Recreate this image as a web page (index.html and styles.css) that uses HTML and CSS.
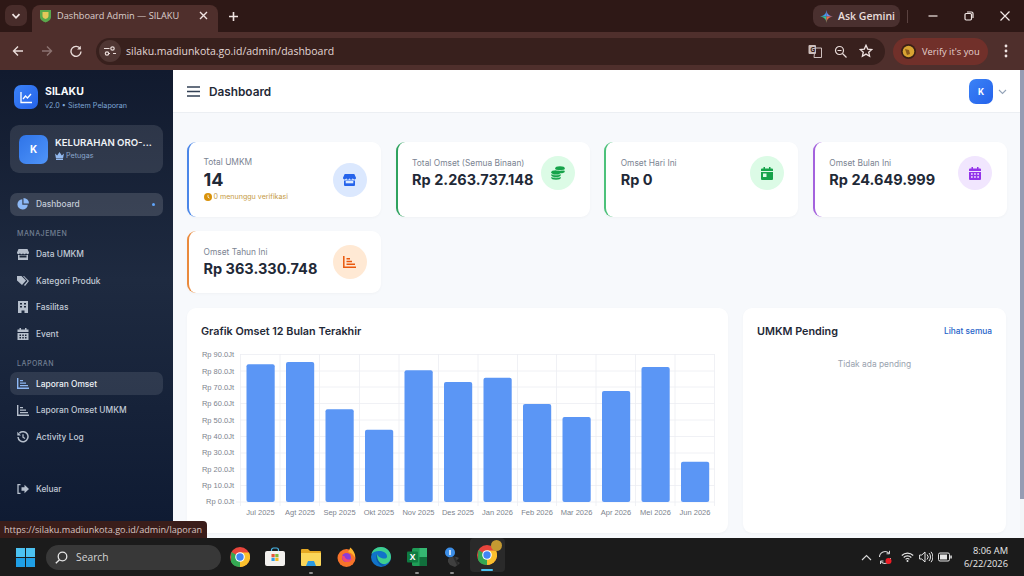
FILE: index.html
```html
<!DOCTYPE html>
<html lang="id">
<head>
<meta charset="utf-8">
<title>Dashboard Admin — SILAKU</title>
<link rel="stylesheet" href="styles.css">
</head>
<body>
<div class="tabstrip">
  <div class="tablist"><svg width="10" height="10" viewBox="0 0 10 10"><path d="M1.500 3.200 5 6.800l3.500-3.600" fill="none" stroke="#f0e4e2" stroke-width="1.800"/></svg></div>
  <div class="tab">
    <svg class="favicon" width="13" height="14" viewBox="0 0 13 14"><path d="M1 1h11v7c0 3-3 4.500-5.500 5.500C4 12.500 1 11 1 8z" fill="#5aa84c"/><path d="M3.500 3h6v4c0 1.500-1.500 2.500-3 3-1.500-.5-3-1.500-3-3z" fill="#e6c85a"/></svg>
    <span class="tabtitle">Dashboard Admin — SILAKU</span>
    <svg class="tabx" width="9" height="9" viewBox="0 0 9 9"><path d="M1 1l7 7M8 1 1 8" stroke="#f0e4e2" stroke-width="1.400"/></svg>
  </div>
  <svg class="newtab" width="11" height="11" viewBox="0 0 11 11"><path d="M5.500 1v9M1 5.500h9" stroke="#f0e4e2" stroke-width="1.600"/></svg>
  <div class="stripspace"></div>
  <div class="gemini">
    <svg width="13" height="13" viewBox="0 0 13 13"><path d="M6.500 6.500V0C6 4 4 6 0 6.500z" fill="#3d9df0"/><path d="M6.500 6.500V0C7 4 9 6 13 6.500z" fill="#6a8cf0"/><path d="M6.500 6.500H0C4 7 6 9 6.500 13z" fill="#35c08f"/><path d="M6.500 6.500H13C9 7 7 9 6.500 13z" fill="#f06a4a"/></svg>
    <span>Ask Gemini</span>
  </div>
  <div class="stripsep"></div>
  <div class="winctl">
    <svg width="12" height="12" viewBox="0 0 12 12"><path d="M1.500 6h9" stroke="#f3e9e7" stroke-width="1.200"/></svg>
    <svg width="12" height="12" viewBox="0 0 12 12"><rect x="2" y="3.500" width="6.500" height="6.500" rx="1.200" fill="none" stroke="#f3e9e7" stroke-width="1.200"/><path d="M4 2h4.500A1.500 1.500 0 0 1 10 3.500V8" fill="none" stroke="#f3e9e7" stroke-width="1.200"/></svg>
    <svg width="12" height="12" viewBox="0 0 12 12"><path d="M1.500 1.500l9 9M10.500 1.500l-9 9" stroke="#f3e9e7" stroke-width="1.200"/></svg>
  </div>
</div>

<div class="toolbar">
  <svg class="navbtn" width="12" height="12" viewBox="0 0 12 12"><path d="M11 6H1.500M6 1.500 1.500 6 6 10.500" fill="none" stroke="#eaddda" stroke-width="1.400"/></svg>
  <svg class="navbtn" width="12" height="12" viewBox="0 0 12 12"><path d="M1 6h9.500M6 1.500 10.500 6 6 10.500" fill="none" stroke="#8c7371" stroke-width="1.400"/></svg>
  <svg class="navbtn" width="12" height="12" viewBox="0 0 12 12"><path d="M10.300 3.800A5 5 0 1 0 11 6.500" fill="none" stroke="#eaddda" stroke-width="1.400"/><path d="M10.800 .8v3.700H7.100z" fill="#eaddda"/></svg>
  <div class="omnibox">
    <div class="siteinfo"><svg width="12" height="10" viewBox="0 0 12 10"><path d="M0 2.500h5.500M9 7.500h3" stroke="#eaddda" stroke-width="1.200"/><circle cx="8.500" cy="2.500" r="1.700" fill="none" stroke="#eaddda" stroke-width="1.200"/><circle cx="3" cy="7.500" r="1.700" fill="none" stroke="#eaddda" stroke-width="1.200"/><path d="M6 7.500h-1" stroke="#eaddda"/></svg></div>
    <span class="url">silaku.madiunkota.go.id/admin/dashboard</span>
    <div class="omniicons">
      <svg width="14" height="14" viewBox="0 0 14 14"><path d="M7 4h6.500v9.500H6z" fill="#3a1f1c" stroke="#cdbfbd"/><rect x="0.500" y="1" width="7.500" height="9" rx="1" fill="#cdbfbd"/><text x="2.200" y="7.800" class="trglyph">G</text></svg>
      <svg width="13" height="13" viewBox="0 0 13 13"><circle cx="5.500" cy="5.500" r="4" fill="none" stroke="#eaddda" stroke-width="1.200"/><path d="M8.500 8.500l4 4M3.500 5.500h4" stroke="#eaddda" stroke-width="1.200"/></svg>
      <svg width="14" height="14" viewBox="0 0 14 14"><path d="M7 1.300l1.700 3.800 4.100.4-3.100 2.700.9 4-3.600-2.100-3.600 2.100.9-4L1.200 5.500l4.100-.4z" fill="none" stroke="#f0e4e2" stroke-width="1.300"/></svg>
    </div>
  </div>
  <div class="verify">
    <svg width="15" height="15" viewBox="0 0 15 15"><circle cx="7.500" cy="7.500" r="7.500" fill="#3a2016"/><circle cx="7.500" cy="7.500" r="5.800" fill="#d8a432"/><path d="M4 5l4 1 1 4-3 1z" fill="#8a5a1c"/></svg>
    <span>Verify it's you</span>
  </div>
  <svg class="kebab" width="4" height="14" viewBox="0 0 4 14"><circle cx="2" cy="2" r="1.400" fill="#f0e4e2"/><circle cx="2" cy="7" r="1.400" fill="#f0e4e2"/><circle cx="2" cy="12" r="1.400" fill="#f0e4e2"/></svg>
</div>

<div class="page">
  <aside class="sidebar">
    <div class="brand">
      <div class="brandlogo"><svg width="13" height="13" viewBox="0 0 13 13"><path d="M1 1v10.500h11" fill="none" stroke="#fff" stroke-width="1.300"/><path d="M3 8l2.500-3 2 2L11 3" fill="none" stroke="#fff" stroke-width="1.300"/></svg></div>
      <div class="brandtext">
        <div class="brandname">SILAKU</div>
        <div class="brandsub">v2.0 • Sistem Pelaporan</div>
      </div>
    </div>
    <div class="usercard">
      <div class="useravatar">K</div>
      <div class="usertext">
        <div class="username">KELURAHAN ORO-...</div>
        <div class="userrole"><svg width="9" height="8" viewBox="0 0 9 8"><path d="M0 1.500l2.200 2L4.500 0l2.300 3.500 2.200-2L8 6.500H1zM1 7h7v1H1z" fill="#93b9ef"/></svg>Petugas</div>
      </div>
    </div>
    <nav class="nav">
      <a class="navitem active"><svg class="navico" width="12" height="12" viewBox="0 0 12 12"><path d="M5.300 1.200A5.200 5.200 0 1 0 10.800 6.700H5.300z" fill="#8db8f5"/><path d="M6.500 0a5.500 5.500 0 0 1 5.500 5.500H6.500z" fill="#8db8f5"/></svg><span>Dashboard</span><i class="navdot"></i></a>
      <div class="navlabel">MANAJEMEN</div>
      <a class="navitem"><svg class="navico" width="12" height="11" viewBox="0 0 12 11"><path d="M1.500 0h9L12 3.500a1.500 1.500 0 0 1-3 .3 1.500 1.500 0 0 1-3 0 1.500 1.500 0 0 1-3 0 1.500 1.500 0 0 1-3-.3z" fill="#b6bfcc"/><path d="M1 6h10v5H1z" fill="#b6bfcc"/><path d="M2.500 6.500h7v2h-7z" fill="#1b2639"/></svg><span>Data UMKM</span></a>
      <a class="navitem"><svg class="navico" width="12" height="10" viewBox="0 0 12 10"><path d="M0 0h4.500L9 4.500 5 9 0 4.500z" fill="#b6bfcc"/><path d="M6 0h1l5 5-4 5-1-1 3.500-4z" fill="#b6bfcc"/></svg><span>Kategori Produk</span></a>
      <a class="navitem"><svg class="navico" width="10" height="12" viewBox="0 0 10 12"><path d="M0 0h10v12H6.500V9.500h-3V12H0z" fill="#b6bfcc"/><path d="M2 2h2v1.500H2zM6 2h2v1.500H6zM2 5h2v1.500H2zM6 5h2v1.500H6z" fill="#1b2639"/></svg><span>Fasilitas</span></a>
      <a class="navitem"><svg class="navico" width="11" height="12" viewBox="0 0 11 12"><path d="M2 0h1.500v1.500h4V0H9v1.500h2V4H0V1.500h2zM0 5h11v7H0z" fill="#b6bfcc"/><path d="M2 6.500h1.500V8H2zM4.800 6.500h1.500V8H4.800zM7.500 6.500H9V8H7.500zM2 9h1.500v1.500H2zM4.800 9h1.500v1.500H4.800zM7.500 9H9v1.500H7.500z" fill="#1b2639"/></svg><span>Event</span></a>
      <div class="navlabel second">LAPORAN</div>
      <a class="navitem current"><svg class="navico" width="12" height="11" viewBox="0 0 12 11"><path d="M.7 0v10.300H12" fill="none" stroke="#8db8f5" stroke-width="1.400"/><path d="M3 2h3v1.300H3zM3 4.500h6v1.300H3zM3 7h8v1.300H3z" fill="#8db8f5"/></svg><span>Laporan Omset</span></a>
      <a class="navitem"><svg class="navico" width="12" height="11" viewBox="0 0 12 11"><path d="M.7 0v10.300H12" fill="none" stroke="#b6bfcc" stroke-width="1.400"/><path d="M3 2h3v1.300H3zM3 4.500h6v1.300H3zM3 7h8v1.300H3z" fill="#b6bfcc"/></svg><span>Laporan Omset UMKM</span></a>
      <a class="navitem"><svg class="navico" width="12" height="12" viewBox="0 0 12 12"><path d="M2.300 2.300A5 5 0 1 1 1 6" fill="none" stroke="#b6bfcc" stroke-width="1.500"/><path d="M.3.800 4 4.500H.3z" fill="#b6bfcc"/><path d="M6 3.200v3l2 1.300" fill="none" stroke="#b6bfcc" stroke-width="1.300"/></svg><span>Activity Log</span></a>
      <a class="navitem logout"><svg class="navico" width="12" height="10" viewBox="0 0 12 10"><path d="M3.500 .7H1v8.600h2.500" fill="none" stroke="#b6bfcc" stroke-width="1.300"/><path d="M4.500 3.300h3V.8L12 5 7.500 9.200V6.700h-3z" fill="#b6bfcc"/></svg><span>Keluar</span></a>
    </nav>
  </aside>

  <main class="main">
    <header class="topbar">
      <svg width="13" height="11" viewBox="0 0 13 11"><path d="M0 1h13M0 5.500h13M0 10h13" stroke="#334155" stroke-width="1.700"/></svg>
      <h1 class="pagetitle">Dashboard</h1>
      <div class="topuser">
        <div class="topavatar">K</div>
        <svg width="9" height="6" viewBox="0 0 9 6"><path d="M1 1l3.500 3.500L8 1" fill="none" stroke="#94a3b8" stroke-width="1.100"/></svg>
      </div>
    </header>

    <div class="content">
      <section class="stats">
        <div class="stat blue">
          <div class="statinner">
            <div class="stattext">
              <div class="statlabel">Total UMKM</div>
              <div class="statvalue big">14</div>
              <div class="statnote"><svg width="8" height="8" viewBox="0 0 8 8"><circle cx="4" cy="4" r="4" fill="#d9920a"/><path d="M4 1.800V4.200l1.500 1" fill="none" stroke="#fff" stroke-width=".8"/></svg>0 menunggu verifikasi</div>
            </div>
            <div class="staticon ic-blue"><svg width="13" height="12" viewBox="0 0 13 12"><path d="M1.700 0h9.600L13 3.800a1.600 1.600 0 0 1-3.200.3 1.600 1.600 0 0 1-3.300 0 1.600 1.600 0 0 1-3.300 0 1.600 1.600 0 0 1-3.200-.3z" fill="#2563eb"/><path d="M1 6.500h11V11a1 1 0 0 1-1 1H2a1 1 0 0 1-1-1z" fill="#2563eb"/><path d="M2.700 7h7.600v2.300H2.700z" fill="#dbeafe"/></svg></div>
          </div>
        </div>
        <div class="stat green">
          <div class="statinner">
            <div class="stattext">
              <div class="statlabel">Total Omset (Semua Binaan)</div>
              <div class="statvalue">Rp 2.263.737.148</div>
            </div>
            <div class="staticon ic-green"><svg width="14" height="14" viewBox="0 0 14 14"><g fill="#16a34a"><ellipse cx="9" cy="2.500" rx="4.800" ry="2.300"/><ellipse cx="9" cy="5.500" rx="4.800" ry="1.800"/><ellipse cx="5" cy="6.300" rx="4.800" ry="2"/><ellipse cx="5" cy="9" rx="4.800" ry="1.800"/><ellipse cx="5" cy="11.800" rx="4.800" ry="1.900"/></g><path d="M.5 7.900c1 1.300 8 1.300 9 0M.5 10.700c1 1.300 8 1.300 9 0M4.500 3.700c1 1.100 8 1.100 9 0" fill="none" stroke="#dcfce7" stroke-width=".7"/></svg></div>
          </div>
        </div>
        <div class="stat lime">
          <div class="statinner">
            <div class="stattext">
              <div class="statlabel">Omset Hari Ini</div>
              <div class="statvalue">Rp 0</div>
            </div>
            <div class="staticon ic-green"><svg width="12" height="13" viewBox="0 0 12 13"><path d="M2.500 0H4v1.500h4V0h1.500v1.500H11A1 1 0 0 1 12 2.500V4H0V2.500a1 1 0 0 1 1-1h1.500zM0 5h12v7a1 1 0 0 1-1 1H1a1 1 0 0 1-1-1z" fill="#16a34a"/><rect x="2" y="6.500" width="3.500" height="3.500" fill="#dcfce7"/></svg></div>
          </div>
        </div>
        <div class="stat purple">
          <div class="statinner">
            <div class="stattext">
              <div class="statlabel">Omset Bulan Ini</div>
              <div class="statvalue">Rp 24.649.999</div>
            </div>
            <div class="staticon ic-purple"><svg width="12" height="13" viewBox="0 0 12 13"><path d="M2.500 0H4v1.500h4V0h1.500v1.500H11A1 1 0 0 1 12 2.500V4H0V2.500a1 1 0 0 1 1-1h1.500zM0 5h12v7a1 1 0 0 1-1 1H1a1 1 0 0 1-1-1z" fill="#9333ea"/><path d="M2 6.200h1.700v1.500H2zM5.100 6.200h1.700v1.500H5.100zM8.300 6.200H10v1.500H8.300zM2 9.200h1.700v1.500H2zM5.100 9.200h1.700v1.500H5.100zM8.300 9.200H10v1.500H8.300z" fill="#f3e8ff"/></svg></div>
          </div>
        </div>
        <div class="stat orange">
          <div class="statinner">
            <div class="stattext">
              <div class="statlabel">Omset Tahun Ini</div>
              <div class="statvalue">Rp 363.330.748</div>
            </div>
            <div class="staticon ic-orange"><svg width="13" height="12" viewBox="0 0 13 12"><path d="M.8 0v11.200H13" fill="none" stroke="#ea580c" stroke-width="1.500"/><path d="M3.500 2H7v1.500H3.500zM3.500 4.800H9v1.500H3.500zM3.500 7.600H12v1.500H3.500z" fill="#ea580c"/></svg></div>
          </div>
        </div>
      </section>

      <section class="panels">
        <div class="panel">
          <h2 class="paneltitle">Grafik Omset 12 Bulan Terakhir</h2>
          <svg class="chart" width="541" height="186" viewBox="187 350 541 186">
            <g class="grid">
              <path d="M240 354.500H714.500M240 371H714.500M240 387H714.500M240 403.500H714.500M240 420H714.500M240 436.500H714.500M240 453H714.500M240 469H714.500M240 485.500H714.500M236 502H714.500"/>
              <path d="M240.500 354V506M280 354V506M319.500 354V506M359.500 354V506M399 354V506M438.500 354V506M478 354V506M517.500 354V506M556.500 354V506M596 354V506M635.500 354V506M675 354V506M714.500 354V506"/>
            </g>
            <g class="bars">
              <rect x="246.500" y="364.300" width="28.200" height="137.700" rx="2"/>
              <rect x="286" y="362" width="28.200" height="140" rx="2"/>
              <rect x="325.500" y="409.300" width="28.200" height="92.700" rx="2"/>
              <rect x="365" y="429.700" width="28.200" height="72.300" rx="2"/>
              <rect x="404.500" y="370.300" width="28.200" height="131.700" rx="2"/>
              <rect x="444" y="382" width="28.200" height="120" rx="2"/>
              <rect x="483.500" y="377.700" width="28.200" height="124.300" rx="2"/>
              <rect x="523" y="404" width="28.200" height="98" rx="2"/>
              <rect x="562.500" y="417" width="28.200" height="85" rx="2"/>
              <rect x="602" y="391" width="28.200" height="111" rx="2"/>
              <rect x="641.500" y="367" width="28.200" height="135" rx="2"/>
              <rect x="681" y="461.700" width="28.200" height="40.300" rx="2"/>
            </g>
            <g class="yticks">
              <text x="234" y="357">Rp 90.0Jt</text>
              <text x="234" y="373.500">Rp 80.0Jt</text>
              <text x="234" y="390">Rp 70.0Jt</text>
              <text x="234" y="406">Rp 60.0Jt</text>
              <text x="234" y="422.500">Rp 50.0Jt</text>
              <text x="234" y="439">Rp 40.0Jt</text>
              <text x="234" y="455">Rp 30.0Jt</text>
              <text x="234" y="471.500">Rp 20.0Jt</text>
              <text x="234" y="488">Rp 10.0Jt</text>
              <text x="234" y="504">Rp 0.0Jt</text>
            </g>
            <g class="xticks">
              <text x="260.500" y="515">Jul 2025</text>
              <text x="300" y="515">Agt 2025</text>
              <text x="339.500" y="515">Sep 2025</text>
              <text x="379" y="515">Okt 2025</text>
              <text x="418.500" y="515">Nov 2025</text>
              <text x="458" y="515">Des 2025</text>
              <text x="497.500" y="515">Jan 2026</text>
              <text x="537" y="515">Feb 2026</text>
              <text x="576.500" y="515">Mar 2026</text>
              <text x="616" y="515">Apr 2026</text>
              <text x="655.500" y="515">Mei 2026</text>
              <text x="695" y="515">Jun 2026</text>
            </g>
          </svg>
        </div>
        <div class="panel pending">
          <div class="pendinghead">
            <h2 class="paneltitle">UMKM Pending</h2>
            <a class="seeall">Lihat semua</a>
          </div>
          <p class="empty">Tidak ada pending</p>
        </div>
      </section>
    </div>
  </main>
  <div class="scrollbar"><div class="scrollthumb"></div></div>
  <div class="statusbubble">https://silaku.madiunkota.go.id/admin/laporan</div>
</div>

<footer class="taskbar">
  <svg class="winlogo" width="19" height="19" viewBox="0 0 19 19"><rect width="9" height="9" fill="#4cc2f1"/><rect x="10" width="9" height="9" fill="#4cc2f1"/><rect y="10" width="9" height="9" fill="#1f9fe6"/><rect x="10" y="10" width="9" height="9" fill="#1f9fe6"/></svg>
  <div class="search">
    <svg width="13" height="13" viewBox="0 0 13 13"><circle cx="7.500" cy="5.500" r="4.300" fill="none" stroke="#e6e6e6" stroke-width="1.300"/><path d="M4.500 8.700.8 12.300" stroke="#e6e6e6" stroke-width="1.400"/></svg>
    <span>Search</span>
  </div>
  <div class="apps">
    <div class="app"><svg width="20" height="20" viewBox="0 0 20 20"><circle cx="10" cy="10" r="10" fill="#e8453c"/><path d="M10 10 1.300 5 1 15a10 10 0 0 0 9 5z" fill="#34a853"/><path d="M10 5.500h9A10 10 0 0 1 10 20z" fill="#fbc02d"/><circle cx="10" cy="10" r="4.800" fill="#fff"/><circle cx="10" cy="10" r="3.700" fill="#4285f4"/></svg></div>
    <div class="app"><svg width="20" height="20" viewBox="0 0 20 20"><path d="M6.500 5V3a2 2 0 0 1 2-2h3a2 2 0 0 1 2 2v2" fill="none" stroke="#49b7e8" stroke-width="1.200"/><rect y="4" width="20" height="15" rx="2" fill="#f3f1ee"/><rect x="6.500" y="7" width="3.200" height="3.200" fill="#e8563a"/><rect x="10.300" y="7" width="3.200" height="3.200" fill="#7fb93a"/><rect x="6.500" y="10.800" width="3.200" height="3.200" fill="#2f9ee8"/><rect x="10.300" y="10.800" width="3.200" height="3.200" fill="#f5b921"/></svg></div>
    <div class="app dotbelow"><svg width="20" height="17" viewBox="0 0 20 17"><path d="M0 1a1 1 0 0 1 1-1h6l2 2h10a1 1 0 0 1 1 1v3H0z" fill="#e5a823"/><path d="M0 4h20v12a1 1 0 0 1-1 1H1a1 1 0 0 1-1-1z" fill="#fbd65a"/><path d="M5 17l2-5h6l2 5z" fill="#2d9ae0"/></svg></div>
    <div class="app"><svg width="19" height="20" viewBox="0 0 19 20"><circle cx="9.500" cy="11" r="9" fill="#f7732a"/><path d="M13 .5c3 2 5.500 6 5 10-2-3-4-5-7-5.500 1-1.500 2-3 2-4.500z" fill="#fdb32c"/><circle cx="9.500" cy="10.500" r="4.500" fill="#8c3bd8"/><path d="M5 9c0 4 3 6.500 6 6 2.500-.5 4-2 4.500-4-1.500 1.500-4 2-6 1-1.500-.8-2-2-2-3z" fill="#f0477a"/></svg></div>
    <div class="app"><svg width="20" height="20" viewBox="0 0 20 20"><circle cx="10" cy="10" r="10" fill="#1173c9"/><path d="M20 10c0-5.500-4.500-10-10-10C5 0 1.500 3 .5 7c2-2.500 5.500-3.500 9-3 4 .5 7 3 6.500 6 0 .8-1 1.500-2.500 1.500C9 11.500 6.500 9 6 7c-1 4 1 9 6 10 4 .7 8-3 8-7z" fill="#3ecf8e"/><path d="M6 7c-2 3-.5 9 4 11.500 1.500.5 3 .2 4.500-.5-4-.5-7-3-8-6.500-.4-1.500-.5-3-.5-4.500z" fill="#0c59a4"/></svg></div>
    <div class="app dotbelow"><svg width="20" height="18" viewBox="0 0 20 18"><rect x="5" width="15" height="18" rx="1.500" fill="#1f9d57"/><rect x="12.500" width="7.500" height="9" fill="#35b872"/><rect x="12.500" y="9" width="7.500" height="9" fill="#116f3c"/><rect y="3.500" width="11" height="11" rx="1" fill="#0f7b41"/><text x="2.700" y="12" class="xlglyph">X</text></svg></div>
    <div class="app dotbelow"><svg width="18" height="21" viewBox="0 0 18 21"><circle cx="7" cy="5.500" r="5" fill="#3d8fe8"/><path d="M7 3v5" stroke="#fff" stroke-width="1.400"/><path d="M5 12c3-2.500 8-3 11-1l-3 3 4 2-5 4-5-2-2-3z" fill="#3f3f3f"/><path d="M11 10l4 8" stroke="#2b2b2b" stroke-width="2"/></svg></div>
    <div class="app activeapp"><svg width="20" height="20" viewBox="0 0 20 20"><circle cx="10" cy="10" r="10" fill="#e8453c"/><path d="M10 10 1.300 5 1 15a10 10 0 0 0 9 5z" fill="#34a853"/><path d="M10 5.500h9A10 10 0 0 1 10 20z" fill="#fbc02d"/><circle cx="10" cy="10" r="4.800" fill="#fff"/><circle cx="10" cy="10" r="3.700" fill="#4285f4"/></svg><i class="appbadge"></i><i class="appline"></i></div>
  </div>
  <div class="tray">
    <svg width="11" height="7" viewBox="0 0 11 7"><path d="M1 6l4.500-4.500L10 6" fill="none" stroke="#d8d8d8" stroke-width="1.100"/></svg>
    <svg class="sync" width="14" height="15" viewBox="0 0 14 15"><path d="M1.500 7a5.500 5.500 0 0 1 9.500-3.700M12.500 8a5.500 5.500 0 0 1-9.500 3.700" fill="none" stroke="#d8d8d8" stroke-width="1.100"/><path d="M11.500 .8v3H8.500M2.500 14v-3h3" fill="none" stroke="#d8d8d8"/><circle cx="10.500" cy="11" r="3" fill="#ee1c25"/></svg>
    <svg width="13" height="10" viewBox="0 0 13 10"><path d="M.8 3.500a8 8 0 0 1 11.400 0M2.700 5.500a5.300 5.300 0 0 1 7.600 0M4.600 7.400a2.600 2.600 0 0 1 3.800 0" fill="none" stroke="#e6e6e6" stroke-width="1.100"/><circle cx="6.500" cy="9" r="1" fill="#e6e6e6"/></svg>
    <svg width="14" height="12" viewBox="0 0 14 12"><path d="M.6 4h2.200L6 1v10L2.800 8H.6z" fill="none" stroke="#e6e6e6"/><path d="M8 3.500a3.500 3.500 0 0 1 0 5M10 2a6 6 0 0 1 0 8M12 .8a8 8 0 0 1 0 10.400" fill="none" stroke="#e6e6e6"/></svg>
    <svg width="14" height="10" viewBox="0 0 14 10"><rect x=".5" y="1" width="11" height="8" rx="1.500" fill="none" stroke="#e6e6e6"/><rect x="2" y="2.500" width="7" height="5" fill="#e6e6e6"/><rect x="12.300" y="3.500" width="1.500" height="3" fill="#e6e6e6"/></svg>
  </div>
  <div class="clock"><span>8:06 AM</span><span>6/22/2026</span></div>
</footer>
</body>
</html>
```
FILE: styles.css
```css
* { box-sizing: border-box; }
html, body { margin: 0; padding: 0; }
body {
  width: 1024px;
  height: 576px;
  overflow: hidden;
  display: flex;
  flex-direction: column;
  font-family: "Inter", "Liberation Sans", sans-serif;
  background: #1c1c1c;
}

/* browser frame */
.tabstrip {
  height: 32px;
  flex: none;
  display: flex;
  align-items: flex-start;
  background: #2e1816;
  font-family: "Open Sans", "Liberation Sans", sans-serif;
}
.tablist {
  width: 22px;
  height: 21px;
  margin: 5px 0 0 5px;
  border-radius: 7px;
  background: #482c2a;
  display: flex;
  align-items: center;
  justify-content: center;
}
.tab {
  width: 186px;
  height: 27px;
  margin: 5px 0 0 5px;
  padding: 0 10px 6px 7px;
  border-radius: 8px 8px 0 0;
  background: #4f2f2c;
  display: flex;
  align-items: center;
}
.tabtitle {
  flex: 1;
  margin-left: 5px;
  font-size: 9.200px;
  color: #ddcfcd;
  white-space: nowrap;
}
.newtab { margin: 11px 0 0 10px; }
.stripspace { flex: 1; }
.gemini {
  width: 87px;
  height: 22px;
  margin-top: 5px;
  border-radius: 8px;
  background: #4a302f;
  display: flex;
  align-items: center;
  gap: 5px;
  padding-left: 7px;
  font-size: 10.500px;
  font-weight: 600;
  color: #e9dedc;
}
.stripsep {
  width: 1px;
  height: 13px;
  margin: 10px 0 0 7px;
  background: #5a4240;
}
.winctl {
  width: 116px;
  margin-top: 10px;
  padding: 0 13px 0 19px;
  display: flex;
  justify-content: space-between;
}
.toolbar {
  height: 38px;
  flex: none;
  display: flex;
  align-items: center;
  background: #4f2f2c;
  padding-left: 12px;
  font-family: "Open Sans", "Liberation Sans", sans-serif;
}
.navbtn { margin-right: 17px; }
.omnibox {
  width: 789px;
  height: 27px;
  margin-left: -3px;
  border-radius: 14px;
  background: #38201d;
  display: flex;
  align-items: center;
  padding: 0 12px 0 3px;
}
.siteinfo {
  width: 22px;
  height: 22px;
  border-radius: 50%;
  background: #4f3633;
  display: flex;
  align-items: center;
  justify-content: center;
}
.url {
  margin-left: 5px;
  font-size: 10.500px;
  color: #e2d6d4;
  white-space: nowrap;
  flex: 1;
}
.omniicons { display: flex; align-items: center; gap: 12px; }
.trglyph { font-size: 7px; fill: #3a1f1c; font-weight: 700; }
.verify {
  width: 95px;
  height: 27px;
  margin-left: 8px;
  border-radius: 14px;
  background: #71302a;
  display: flex;
  align-items: center;
  gap: 6px;
  padding-left: 8px;
  font-size: 9.300px;
  color: #e6d2cf;
  white-space: nowrap;
}
.kebab { margin-left: 16px; }

/* page */
.page {
  position: relative;
  height: 468px;
  flex: none;
  display: flex;
  overflow: hidden;
  background: #f7f9fc;
}
.sidebar {
  width: 173px;
  flex: none;
  padding: 15px 10px 0;
  background: linear-gradient(180deg, #111a2e 0%, #1e2a40 45%, #0e1a32 100%);
}
.brand { display: flex; align-items: center; gap: 7px; padding-left: 4px; height: 24px; }
.brandtext { padding-top: 2px; }
.brandlogo, .useravatar, .topavatar {
  display: flex;
  align-items: center;
  justify-content: center;
  background: linear-gradient(135deg, #3b82f6, #2563eb);
  color: #fff;
  font-weight: 700;
}
.brandlogo { width: 24px; height: 24px; border-radius: 7px; }
.brandname { font-size: 10.500px; font-weight: 700; color: #f8fafc; line-height: 13px; }
.brandsub { font-size: 7.200px; color: #7ea6d6; line-height: 10px; margin-top: 3px; white-space: nowrap; }
.usercard {
  margin-top: 16px;
  height: 48px;
  border-radius: 9px;
  background: rgba(255, 255, 255, 0.11);
  display: flex;
  align-items: center;
  gap: 7px;
  padding-left: 9px;
}
.useravatar { width: 29px; height: 29px; border-radius: 7px; font-size: 10px; background: linear-gradient(135deg, #2f74e8, #4f94f8); }
.username { font-size: 9.600px; font-weight: 600; color: #eef2f7; line-height: 12px; white-space: nowrap; }
.userrole { display: flex; align-items: center; gap: 2px; font-size: 7.200px; color: #8aa6cc; line-height: 10px; margin-top: 2px; }
.nav { margin-top: 19.500px; display: flex; flex-direction: column; }
.navitem {
  height: 23px;
  margin-bottom: 3.500px;
  border-radius: 7px;
  display: flex;
  align-items: center;
  padding-left: 7px;
  font-size: 8.400px;
  font-weight: 500;
  color: #c2cad6;
  white-space: nowrap;
}
.navico { flex: none; margin-right: 7px; width: 12px; }
.navitem.active { background: rgba(255, 255, 255, 0.14); color: #c5ccd8; }
.navitem.current { background: rgba(255, 255, 255, 0.1); color: #eef2f7; }
.navdot { width: 3px; height: 3px; margin-left: auto; margin-right: 8px; border-radius: 50%; background: #60a5fa; }
.navlabel {
  height: 23px;
  margin-top: -3px;
  margin-bottom: 3.500px;
  display: flex;
  align-items: flex-end;
  padding: 0 0 0 7px;
  font-size: 7px;
  font-weight: 500;
  letter-spacing: .5px;
  color: #727f92;
  line-height: 11px;
}
.navlabel.second { height: 19.500px; margin-top: 0.500px; }
.logout { margin-top: 25.500px; }

.main { width: 847px; flex: none; }
.topbar {
  height: 43px;
  padding: 1px 0 0 14px;
  background: #fff;
  border-bottom: 1px solid #eceff3;
  display: flex;
  align-items: center;
}
.pagetitle { margin: 0 0 0 9px; font-size: 11.800px; font-weight: 600; color: #1f2937; }
.topuser { margin-left: auto; margin-right: 13px; display: flex; align-items: center; gap: 5px; }
.topavatar { width: 24px; height: 25px; border-radius: 7px; font-size: 8.500px; }
.content { padding: 29px 14px 0; }
.stats {
  display: grid;
  grid-template-columns: repeat(4, 194px);
  gap: 14px 14.600px;
}
.stat {
  background: #fff;
  border-left: 2.500px solid;
  border-radius: 9px;
  padding: 14px 14.500px;
  box-shadow: 0 1px 3px rgba(15, 23, 42, 0.03);
}
.blue { border-color: #4a86e8; }
.green { border-color: #2fa35f; }
.lime { border-color: #4cc17a; }
.purple { border-color: #a463dd; }
.orange { border-color: #ea8a3c; }
.statinner { display: flex; align-items: center; justify-content: space-between; }
.statlabel { font-size: 8.400px; color: #7b8492; line-height: 12px; }
.statvalue { font-size: 14.500px; font-weight: 700; color: #1f2937; line-height: 21px; white-space: nowrap; }
.statvalue.big { font-size: 18px; line-height: 23px; }
.statnote { display: flex; align-items: center; gap: 2px; font-size: 7.100px; color: #c59a44; line-height: 12px; }
.staticon {
  width: 34px;
  height: 34px;
  flex: none;
  border-radius: 50%;
  display: flex;
  align-items: center;
  justify-content: center;
}
.ic-blue { background: #dbe8fe; }
.ic-green { background: #dcfbe6; }
.ic-purple { background: #f1e6fe; }
.ic-orange { background: #ffe9d4; }

.panels {
  margin-top: 15px;
  display: grid;
  grid-template-columns: 541px 263px;
  gap: 15px;
}
.panel {
  height: 225px;
  background: #fff;
  border-radius: 9px;
  box-shadow: 0 1px 3px rgba(15, 23, 42, 0.03);
  position: relative;
}
.paneltitle {
  margin: 0;
  padding: 17px 0 0 14px;
  font-size: 10.800px;
  font-weight: 600;
  line-height: 14px;
  color: #1f2937;
}
.chart { display: block; margin-top: 11px; }
.grid path { fill: none; stroke: #eceef2; stroke-width: .8; }
.bars rect { fill: #5b96f5; }
.yticks text, .xticks text {
  font-family: "Liberation Sans", sans-serif;
  font-size: 7.500px;
  fill: #7d848e;
}
.yticks text { text-anchor: end; }
.xticks text { text-anchor: middle; }
.pendinghead { display: flex; justify-content: space-between; align-items: flex-start; }
.seeall { padding: 17px 14px 0 0; font-size: 8.300px; line-height: 12px; color: #2563c9; font-weight: 500; }
.empty { margin: 19px 0 0; text-align: center; font-size: 8.400px; line-height: 12px; color: #9aa3af; }

.scrollbar { width: 4px; flex: none; background: #f3f5f8; }
.scrollthumb { height: 429px; background: #959cb3; }
.statusbubble {
  position: absolute;
  left: 0;
  bottom: 0;
  width: 207px;
  height: 17px;
  border-radius: 0 4px 0 0;
  background: #3a1d1a;
  padding-left: 4px;
  font-family: "Open Sans", "Liberation Sans", sans-serif;
  font-size: 9.100px;
  line-height: 17px;
  color: #d9c5c2;
  white-space: nowrap;
}

/* taskbar */
.taskbar {
  height: 38px;
  flex: none;
  display: flex;
  align-items: center;
  background: #1b1b1b;
  font-family: "Open Sans", "Liberation Sans", sans-serif;
}
.winlogo { margin-left: 16px; }
.search {
  width: 175px;
  height: 25px;
  margin-left: 11px;
  border-radius: 13px;
  background: #383838;
  display: flex;
  align-items: center;
  gap: 8px;
  padding-left: 9px;
  font-size: 10.300px;
  color: #d5d5d5;
}
.apps { display: flex; margin-left: 1.500px; }
.app {
  position: relative;
  width: 35.300px;
  height: 38px;
  display: flex;
  align-items: center;
  justify-content: center;
}
.dotbelow::after {
  content: "";
  position: absolute;
  left: 50%;
  bottom: 2px;
  width: 4px;
  height: 2px;
  margin-left: -2px;
  border-radius: 1px;
  background: #8e8e8e;
}
.activeapp { background: #2a2a2a; border-radius: 4px; height: 34px; }
.appbadge {
  position: absolute;
  right: 3px;
  top: 2px;
  width: 11px;
  height: 11px;
  border-radius: 50%;
  background: #c49a32;
}
.appline {
  position: absolute;
  left: 50%;
  bottom: 1px;
  width: 12px;
  height: 2px;
  margin-left: -6px;
  border-radius: 1px;
  background: #4cc2f1;
}
.xlglyph { font-size: 8.500px; font-weight: 700; fill: #fff; }
.tray { margin-left: auto; display: flex; align-items: center; gap: 5px; }
.sync { margin: 0 4.500px 0 .5px; }
.clock {
  width: 56px;
  margin-right: 16px;
  display: flex;
  flex-direction: column;
  align-items: flex-end;
  font-size: 9.300px;
  line-height: 13px;
  color: #e8e8e8;
}
```
